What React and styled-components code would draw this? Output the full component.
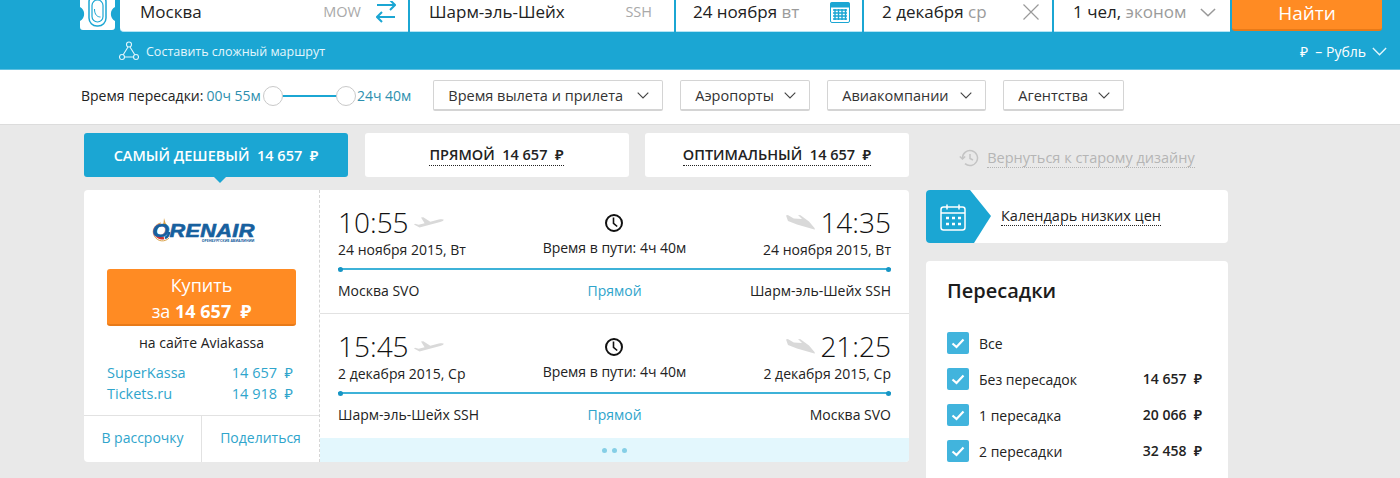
import React from "react";
import styled, { createGlobalStyle } from "styled-components";

const BLUE = "#1ba6d3";
const LINK = "#2fa5cc";
const ORANGE = "#ff8b23";

const GlobalStyle = createGlobalStyle`
  html, body {
    margin: 0;
    padding: 0;
    height: 478px;
    overflow: hidden;
    background: #e9e9e9;
    font-family: "Open Sans", "Noto Sans", sans-serif;
    color: #222;
  }
  * { box-sizing: border-box; }
`;

const Header = styled.header`
  height: 70px;
  background: ${BLUE};
  padding-left: 80px;
  border-bottom: 1px solid #5fc0e0;
`;

const SearchRow = styled.div`
  display: flex;
  height: 33px;
  align-items: flex-start;
`;

const LogoBox = styled.div`
  width: 35px;
  height: 30px;
  margin-right: 5px;
  flex: none;
`;

const Cell = styled.div`
  display: flex;
  align-items: center;
  width: ${(p) => p.$w}px;
  height: 32px;
  margin-right: 2px;
  padding: 0 ${(p) => p.$pr ?? 12}px 7px ${(p) => p.$pl ?? 18}px;
  background: #fff;
  border-bottom: 1px solid #b4e4f4;
  border-radius: ${(p) => (p.$first ? "0 0 0 4px" : "0")};
  font-size: 17px;
  line-height: 24px;
  white-space: nowrap;
`;

const Grow = styled.span`
  flex: 1;
`;

const Code = styled.span`
  font-size: 14.5px;
  color: #a9a9a9;
`;

const Muted = styled.span`
  color: #9b9b9b;
`;

const FindButton = styled.button`
  width: 150px;
  height: 31px;
  padding: 0 0 7px;
  border: 0;
  border-radius: 0 0 3px 3px;
  border-bottom: 2px solid #e87a18;
  background: ${ORANGE};
  color: #fff;
  font-family: inherit;
  font-size: 19px;
`;

const SubRow = styled.div`
  display: flex;
  align-items: center;
  justify-content: space-between;
  height: 36px;
  padding: 0 13px 0 39px;
  color: #fff;
`;

const RouteLink = styled.span`
  display: flex;
  align-items: center;
  gap: 7px;
  font-size: 12.5px;
  color: #e4f6fc;
`;

const Currency = styled.span`
  display: flex;
  align-items: center;
  gap: 6px;
  font-size: 14px;
`;

const FilterBar = styled.div`
  display: flex;
  align-items: center;
  height: 55px;
  padding: 0 0 3px 81px;
  background: #fff;
  border-bottom: 1px solid #dcdcdc;
`;

const FilterLabel = styled.span`
  font-size: 14px;
  margin-right: 3px;
`;

const FilterValue = styled.span`
  font-size: 14px;
  color: #2d8fae;
`;

const Slider = styled.div`
  position: relative;
  width: 93px;
  height: 20px;
  margin: 0 1px 0 2px;
  &::before {
    content: "";
    position: absolute;
    left: 10px;
    right: 10px;
    top: 9px;
    height: 2px;
    background: ${BLUE};
  }
`;

const Thumb = styled.span`
  position: absolute;
  top: 0;
  ${(p) => (p.$end ? "right: 0;" : "left: 0;")}
  width: 20px;
  height: 20px;
  border-radius: 50%;
  background: #fff;
  border: 1px solid #c9c9c9;
`;

const Selects = styled.div`
  display: flex;
  gap: 17px;
  margin-left: 22px;
`;

const Select = styled.div`
  display: flex;
  align-items: center;
  justify-content: space-between;
  width: ${(p) => p.$w}px;
  height: 31px;
  padding: 0 13px 0 14px;
  border: 1px solid #d4d4d4;
  border-bottom-width: 2px;
  border-radius: 2px;
  font-size: 14.5px;
  color: #333;
  white-space: nowrap;
`;

const Main = styled.main`
  display: grid;
  grid-template-columns: 825px 302px;
  column-gap: 17px;
  padding: 8px 0 0 84px;
`;

const Results = styled.section`
  display: flex;
  flex-direction: column;
  gap: 13px;
`;

const Tabs = styled.div`
  display: flex;
  justify-content: space-between;
  height: 44px;
`;

const Tab = styled.div`
  position: relative;
  display: flex;
  align-items: center;
  justify-content: center;
  width: 264px;
  border-radius: 3px;
  font-size: 14.5px;
  font-weight: 600;
  background: ${(p) => (p.$active ? BLUE : "#fff")};
  color: ${(p) => (p.$active ? "#fff" : "#222")};
  ${(p) =>
    p.$active &&
    `&::after {
      content: "";
      position: absolute;
      left: 130px;
      bottom: -6px;
      border-left: 6px solid transparent;
      border-right: 6px solid transparent;
      border-top: 6px solid ${BLUE};
    }`}
`;

const TabLabel = styled.span`
  padding-bottom: ${(p) => (p.$dotted ? "1px" : "0")};
  border-bottom: ${(p) => (p.$dotted ? "1px dotted #222" : "0")};
  white-space: pre;
`;

const Card = styled.div`
  display: flex;
  height: 272px;
  background: #fff;
  border-radius: 4px;
  overflow: hidden;
`;

const Offer = styled.div`
  display: flex;
  flex-direction: column;
  width: 236px;
  flex: none;
  border-right: 1px dashed #d6d6d6;
`;

const OfferTop = styled.div`
  flex: 1;
  padding: 0 23px;
  text-align: center;
`;

const CarrierLogo = styled.div`
  display: flex;
  justify-content: center;
  align-items: flex-start;
  height: 79px;
  padding-top: 25px;
`;

const LogoMark = styled.div`
  display: flex;
  flex-direction: column;
  align-items: flex-end;
  margin-left: -1px;
`;

const LogoWord = styled.span`
  margin-top: 9px;
  font-family: "Liberation Sans", sans-serif;
  font-size: 17.5px;
  line-height: 14px;
  font-weight: 700;
  font-style: italic;
  letter-spacing: 0.3px;
  color: #17609e;
  -webkit-text-stroke: 0.6px #17609e;
  transform: scaleX(1.24);
  transform-origin: right center;
`;

const LogoSub = styled.span`
  font-size: 3.5px;
  line-height: 5px;
  font-weight: 700;
  color: #17609e;
  white-space: nowrap;
`;

const BuyButton = styled.div`
  height: 57px;
  padding-top: 3px;
  border-radius: 3px;
  border-bottom: 2px solid #e87a18;
  background: ${ORANGE};
  color: #fff;
  font-size: 18px;
  line-height: 26px;
  strong {
    font-weight: 700;
  }
`;

const SiteNote = styled.div`
  margin-top: 7px;
  font-size: 14px;
  line-height: 20px;
`;

const AgencyList = styled.div`
  margin-top: 9px;
`;

const Agency = styled.div`
  display: flex;
  justify-content: space-between;
  padding-right: 3px;
  font-size: 14.5px;
  line-height: 21px;
  color: ${LINK};
`;

const OfferActions = styled.div`
  display: grid;
  grid-template-columns: 117px 1fr;
  height: 47px;
  border-top: 1px solid #e2e2e2;
`;

const OfferAction = styled.div`
  display: flex;
  align-items: center;
  justify-content: center;
  padding-bottom: 3px;
  font-size: 14px;
  color: ${LINK};
  & + & {
    border-left: 1px solid #e2e2e2;
  }
`;

const Flights = styled.div`
  display: flex;
  flex-direction: column;
  flex: 1;
`;

const Flight = styled.div`
  height: ${(p) => p.$h}px;
  padding: 14px 18px 0 18px;
  border-bottom: ${(p) => (p.$line ? "1px solid #e2e2e2" : "0")};
`;

const FlightTop = styled.div`
  display: grid;
  grid-template-columns: 1fr 1fr 1fr;
  height: 56px;
`;

const Endpoint = styled.div`
  text-align: ${(p) => (p.$right ? "right" : "left")};
`;

const TimeRow = styled.div`
  display: flex;
  align-items: center;
  justify-content: ${(p) => (p.$right ? "flex-end" : "flex-start")};
  gap: 5px;
  height: 36px;
  font-size: 28px;
  line-height: 36px;
  font-weight: 300;
  color: #111;
`;

const DateText = styled.div`
  font-size: 14px;
  line-height: 20px;
`;

const Duration = styled.div`
  display: flex;
  flex-direction: column;
  align-items: center;
  gap: 5px;
  padding-top: 9px;
  font-size: 14px;
  line-height: 20px;
`;

const Track = styled.div`
  position: relative;
  height: 2px;
  margin-top: 8px;
  background: #3db2d8;
  &::before,
  &::after {
    content: "";
    position: absolute;
    top: -1px;
    width: 5px;
    height: 5px;
    border-radius: 50%;
    background: #1795c4;
  }
  &::before { left: 0; }
  &::after { right: 0; }
`;

const FlightBottom = styled.div`
  display: grid;
  grid-template-columns: 1fr auto 1fr;
  margin-top: 11px;
  font-size: 14px;
  line-height: 20px;
`;

const Direct = styled.span`
  color: ${LINK};
`;

const RightText = styled.span`
  text-align: right;
`;

const More = styled.div`
  flex: 1;
  display: flex;
  align-items: center;
  justify-content: center;
  gap: 5px;
  background: #e3f7fd;
`;

const Dot = styled.span`
  width: 5px;
  height: 5px;
  border-radius: 50%;
  background: #86cfe6;
`;

const Sidebar = styled.aside`
  display: flex;
  flex-direction: column;
`;

const OldDesign = styled.div`
  display: flex;
  align-items: center;
  justify-content: center;
  gap: 8px;
  height: 44px;
  margin-bottom: 13px;
  padding: 6px 0 0 0;
  font-size: 14.5px;
  color: #b5b5b5;
`;

const DottedGrey = styled.span`
  border-bottom: 1px dotted #b5b5b5;
  line-height: 18px;
`;

const CalendarCard = styled.div`
  display: flex;
  align-items: center;
  height: 53px;
  background: #fff;
  border-radius: 4px;
  overflow: hidden;
`;

const CalendarFlag = styled.div`
  width: 65px;
  height: 53px;
  flex: none;
  display: flex;
  align-items: center;
  padding-left: 14px;
  background: ${BLUE};
  clip-path: polygon(0 0, 44px 0, 65px 26px, 48px 53px, 0 53px);
`;

const CalendarLink = styled.span`
  margin-left: 10px;
  font-size: 14.5px;
  line-height: 18px;
  border-bottom: 1px dotted #222;
`;

const Panel = styled.div`
  margin-top: 18px;
  height: 260px;
  padding: 15px 26px 0 21px;
  background: #fff;
  border-radius: 4px 4px 0 0;
`;

const PanelTitle = styled.h3`
  margin: 0 0 26px;
  font-size: 20px;
  line-height: 30px;
  font-weight: 600;
  color: #1c1c1c;
`;

const StopList = styled.div`
  display: flex;
  flex-direction: column;
  gap: 14px;
`;

const StopRow = styled.div`
  display: flex;
  align-items: center;
  height: 22px;
  font-size: 14px;
`;

const Check = styled.span`
  display: flex;
  align-items: center;
  justify-content: center;
  width: 22px;
  height: 22px;
  margin-right: 10px;
  border-radius: 2px;
  background: #41b4dd;
`;

const StopPrice = styled.span`
  margin-left: auto;
  margin-top: -2px;
  font-size: 14px;
  font-weight: 600;
  white-space: pre;
`;

function Chevron({ size = 12, color = "#444", height = 7 }) {
  return (
    <svg width={size} height={height} viewBox="0 0 12 7" fill="none" preserveAspectRatio="none">
      <path d="M.7.7 6 6l5.3-5.3" stroke={color} strokeWidth="1.1" />
    </svg>
  );
}

function PlaneUp() {
  return (
    <svg width="30" height="14" viewBox="0 0 30 14" fill="#d9d9d9">
      <path d="M0 9.5 1 8.8l3.6 1 6-1.6L7 2.5l2.3-.3 7 4.6 8.5-2.3c2-.5 4.4-.4 4.9.2.3.7-1.6 1.7-3.600 2.300L5.500 12.500z" />
    </svg>
  );
}

function PlaneDown() {
  return (
    <svg width="30" height="17" viewBox="0 0 30 17" fill="#d9d9d9">
      <path d="M1 1.500 2.800 1l6 3.500L17 5l-4-4 2.500.3 8.500 6.200 5.500 6.500.5 1.500-1.500-.3L12 10.500 3 7z" />
    </svg>
  );
}

function Clock() {
  return (
    <svg width="20" height="20" viewBox="0 0 20 20" fill="none" stroke="#111" strokeWidth="2">
      <circle cx="10" cy="10" r="8" />
      <path d="M9.500 4.500v5.800l3.700 3.200" strokeWidth="1.600" />
    </svg>
  );
}

function CheckMark() {
  return (
    <svg width="14" height="11" viewBox="0 0 14 11" fill="none">
      <path d="M1.500 5.500 5.500 9l7-7.500" stroke="#fff" strokeWidth="2.200" />
    </svg>
  );
}

function FlightBlock({ dep, depDate, arr, arrDate, from, to, h, line }) {
  return (
    <Flight $h={h} $line={line}>
      <FlightTop>
        <Endpoint>
          <TimeRow>
            {dep}
            <PlaneUp />
          </TimeRow>
          <DateText>{depDate}</DateText>
        </Endpoint>
        <Duration>
          <Clock />
          Время в пути: 4ч 40м
        </Duration>
        <Endpoint $right>
          <TimeRow $right>
            <PlaneDown />
            {arr}
          </TimeRow>
          <DateText>{arrDate}</DateText>
        </Endpoint>
      </FlightTop>
      <Track />
      <FlightBottom>
        <span>{from}</span>
        <Direct>Прямой</Direct>
        <RightText>{to}</RightText>
      </FlightBottom>
    </Flight>
  );
}

const stops = [
  { label: "Все" },
  { label: "Без пересадок", price: "14 657  ₽" },
  { label: "1 пересадка", price: "20 066  ₽" },
  { label: "2 пересадки", price: "32 458  ₽" },
];

export default function App() {
  return (
    <>
      <GlobalStyle />
      <Header>
        <SearchRow>
          <LogoBox>
            <svg width="35" height="30" viewBox="0 0 35 30">
              <path
                d="M0 0h35v7a8 8 0 0 0 0 14v6a3 3 0 0 1-3 3H3a3 3 0 0 1-3-3v-6A8 8 0 0 0 0 7z"
                fill="#fff"
              />
              <rect x="9" y="-6" width="17" height="32" rx="8" fill="none" stroke={BLUE} strokeWidth="1.500" />
              <rect x="12" y="0" width="11" height="22" rx="5.500" fill="#fff" stroke={BLUE} strokeWidth="1.200" />
              <path d="M14.500 9c0 6 3 8 6 8" fill="none" stroke={BLUE} strokeWidth="1" />
            </svg>
          </LogoBox>
          <Cell $w={288} $first $pl={20} $pr={12}>
            Москва
            <Grow />
            <Code>MOW</Code>
            <svg width="20" height="22" viewBox="0 0 20 22" fill="none" stroke={BLUE} strokeWidth="2" style={{ marginLeft: 15 }}>
              <path d="M0 6h18M13 1l5 5-5 5" transform="translate(1 -2)" />
              <path d="M20 15H2M7 10l-5 5 5 5" transform="translate(-1 1)" />
            </svg>
          </Cell>
          <Cell $w={264} $pl={19} $pr={22}>
            Шарм-эль-Шейх
            <Grow />
            <Code>SSH</Code>
          </Cell>
          <Cell $w={186} $pl={17} $pr={12}>
            <span>
              24 ноября <Muted>вт</Muted>
            </span>
            <Grow />
            <svg width="20" height="24" viewBox="0 0 20 24" fill="none">
              <rect x="0.500" y="2.500" width="19" height="20" rx="1.500" fill="#fff" stroke={BLUE} />
              <rect x="0.500" y="2.500" width="19" height="5" fill={BLUE} />
              <path d="M3 10h14M3 13h14M3 16h14M3 19h14M5 9v11M8.500 9v11M12 9v11M15.500 9v11" stroke={BLUE} strokeWidth="1.400" />
            </svg>
          </Cell>
          <Cell $w={188} $pl={18} $pr={13}>
            <span>
              2 декабря <Muted>ср</Muted>
            </span>
            <Grow />
            <svg width="16" height="16" viewBox="0 0 16 16" stroke="#9a9a9a" strokeWidth="1.200">
              <path d="M.5.500l15 15M15.500.500l-15 15" />
            </svg>
          </Cell>
          <Cell $w={176} $pl={19} $pr={14}>
            <span>
              1 чел, <Muted>эконом</Muted>
            </span>
            <Grow />
            <Chevron size={16} height={9} color="#999" />
          </Cell>
          <FindButton>Найти</FindButton>
        </SearchRow>
        <SubRow>
          <RouteLink>
            <svg width="20" height="20" viewBox="0 0 20 20" fill="none" stroke="#e4f6fc" strokeWidth="1.100">
              <circle cx="10" cy="3.500" r="2.500" />
              <circle cx="3" cy="16" r="2.500" />
              <circle cx="17" cy="16" r="2.500" />
              <path d="M9 6 4.200 13.800M11 6l4.800 7.800M5.500 16h9" />
            </svg>
            Составить сложный маршрут
          </RouteLink>
          <Currency>
            ₽ &nbsp;– Рубль
            <Chevron size={15} height={9} color="#e4f6fc" />
          </Currency>
        </SubRow>
      </Header>

      <FilterBar>
        <FilterLabel>Время пересадки:</FilterLabel>
        <FilterValue>00ч 55м</FilterValue>
        <Slider>
          <Thumb />
          <Thumb $end />
        </Slider>
        <FilterValue>24ч 40м</FilterValue>
        <Selects>
          <Select $w={230}>
            Время вылета и прилета
            <Chevron />
          </Select>
          <Select $w={130}>
            Аэропорты
            <Chevron />
          </Select>
          <Select $w={159}>
            Авиакомпании
            <Chevron />
          </Select>
          <Select $w={121}>
            Агентства
            <Chevron />
          </Select>
        </Selects>
      </FilterBar>

      <Main>
        <Results>
          <Tabs>
            <Tab $active>
              <TabLabel>САМЫЙ ДЕШЕВЫЙ  14 657  ₽</TabLabel>
            </Tab>
            <Tab>
              <TabLabel $dotted>ПРЯМОЙ  14 657  ₽</TabLabel>
            </Tab>
            <Tab>
              <TabLabel $dotted>ОПТИМАЛЬНЫЙ  14 657  ₽</TabLabel>
            </Tab>
          </Tabs>
          <Card>
            <Offer>
              <OfferTop>
                <CarrierLogo>
                  <svg width="24" height="30" viewBox="0 0 24 30" fill="none">
                    <path d="M12 8a9 9 0 1 0 8 15" stroke="#d9a24a" strokeWidth="1" />
                    <path d="M11 10a6.500 6.500 0 0 0 4 13" stroke="#d2322d" strokeWidth="2.500" />
                    <path d="M16 23a6.500 6.500 0 0 0 4-6" stroke="#17609e" strokeWidth="2.500" />
                    <path d="M15 3l1.500 5 2 3-2-.5-1 2.500-1-2.500-2 .5 2-3z" fill="#d9a24a" />
                  </svg>
                  <LogoMark>
                    <LogoWord>ORENAIR</LogoWord>
                    <LogoSub>ОРЕНБУРГСКИЕ АВИАЛИНИИ</LogoSub>
                  </LogoMark>
                </CarrierLogo>
                <BuyButton>
                  Купить
                  <br />
                  за <strong>14 657 &nbsp;₽</strong>
                </BuyButton>
                <SiteNote>на сайте Aviakassa</SiteNote>
                <AgencyList>
                  <Agency>
                    <span>SuperKassa</span>
                    <span>14 657 &nbsp;₽</span>
                  </Agency>
                  <Agency>
                    <span>Tickets.ru</span>
                    <span>14 918 &nbsp;₽</span>
                  </Agency>
                </AgencyList>
              </OfferTop>
              <OfferActions>
                <OfferAction>В рассрочку</OfferAction>
                <OfferAction>Поделиться</OfferAction>
              </OfferActions>
            </Offer>
            <Flights>
              <FlightBlock
                h={124}
                line
                dep="10:55"
                depDate="24 ноября 2015, Вт"
                arr="14:35"
                arrDate="24 ноября 2015, Вт"
                from="Москва SVO"
                to="Шарм-эль-Шейх SSH"
              />
              <FlightBlock
                h={124}
                dep="15:45"
                depDate="2 декабря 2015, Ср"
                arr="21:25"
                arrDate="2 декабря 2015, Ср"
                from="Шарм-эль-Шейх SSH"
                to="Москва SVO"
              />
              <More>
                <Dot />
                <Dot />
                <Dot />
              </More>
            </Flights>
          </Card>
        </Results>

        <Sidebar>
          <OldDesign>
            <svg width="20" height="18" viewBox="0 0 20 18" fill="none" stroke="#c4c4c4" strokeWidth="1.500">
              <path d="M3.500 9a7.500 7.500 0 1 1 2.500 5.600" />
              <path d="M.8 7.500 3.500 10l2.700-2.500" />
              <path d="M11 5v4.500l3 1.500" />
            </svg>
            <DottedGrey>Вернуться к старому дизайну</DottedGrey>
          </OldDesign>
          <CalendarCard>
            <CalendarFlag>
              <svg width="26" height="28" viewBox="0 0 26 28" fill="none" stroke="#fff" strokeWidth="1.500">
                <rect x="1" y="4" width="24" height="23" rx="2.500" />
                <path d="M1 10h24M7 1.500v5M19 1.500v5" />
                <path d="M6 15h3M12 15h3M18 15h3M6 21h3M12 21h3M18 21h3" strokeWidth="2.500" />
              </svg>
            </CalendarFlag>
            <CalendarLink>Календарь низких цен</CalendarLink>
          </CalendarCard>
          <Panel>
            <PanelTitle>Пересадки</PanelTitle>
            <StopList>
              {stops.map((s) => (
                <StopRow key={s.label}>
                  <Check>
                    <CheckMark />
                  </Check>
                  {s.label}
                  {s.price && <StopPrice>{s.price}</StopPrice>}
                </StopRow>
              ))}
            </StopList>
          </Panel>
        </Sidebar>
      </Main>
    </>
  );
}
